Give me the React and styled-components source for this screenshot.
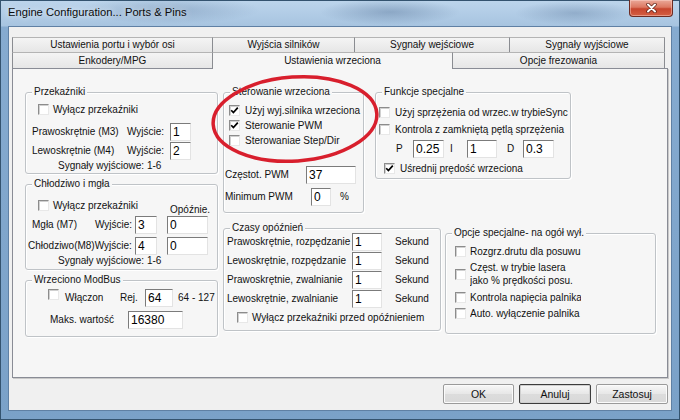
import React from 'react';
import styled, { createGlobalStyle } from 'styled-components';

const PAGE_BG = '#f6f6f6';

const GlobalStyle = createGlobalStyle`
  html, body { margin: 0; padding: 0; }
  body {
    width: 680px;
    height: 420px;
    overflow: hidden;
    font-family: "Liberation Sans", Arial, sans-serif;
    font-size: 10px;
    color: #111;
  }
`;

const Window = styled.div`
  position: relative;
  width: 680px;
  height: 420px;
  box-sizing: border-box;
  display: flex;
  flex-direction: column;
  overflow: hidden;
  background:
    radial-gradient(ellipse 90px 14px at 170px 10px, rgba(60, 90, 130, 0.25), transparent),
    radial-gradient(ellipse 70px 13px at 390px 12px, rgba(50, 80, 120, 0.3), transparent),
    radial-gradient(ellipse 60px 12px at 575px 13px, rgba(50, 80, 120, 0.25), transparent),
    linear-gradient(#bdd5ec, #a7c4e0 26px, #86abd0 27px, #7aa1c8);
  box-shadow: inset 0 0 0 1px #34536f;
`;

const TitleBar = styled.div`
  height: 26px;
  flex-shrink: 0;
  display: flex;
  align-items: flex-start;
  justify-content: space-between;
`;

const Title = styled.div`
  padding-left: 8px;
  line-height: 24px;
  font-size: 11.2px;
  color: #0c0c0c;
  text-shadow: 0 0 6px rgba(255, 255, 255, 0.9);
`;

const CloseButton = styled.div`
  width: 44px;
  height: 17px;
  margin-right: 7px;
  box-sizing: border-box;
  display: flex;
  align-items: center;
  justify-content: center;
  border: 1px solid #6d2b22;
  border-top: none;
  border-radius: 0 0 4px 4px;
  background: linear-gradient(#eaa899 0%, #dc7862 45%, #c7452e 55%, #d45f43 100%);
  box-shadow: inset 0 0 0 1px rgba(255, 220, 210, 0.45);
`;

const Client = styled.div`
  flex: 1;
  margin: 0 8px 9px 8px;
  display: flex;
  flex-direction: column;
  padding: 10px 3px 0 3px;
  background: #f0f0f0;
  border: 1px solid #5f80a4;
`;

const TabRow = styled.div`
  display: flex;
  align-items: flex-end;
  height: ${p => p.h}px;
`;

const Tab = styled.div`
  position: relative;
  width: ${p => p.w}px;
  height: ${p => (p.selected ? p.h + 1 : p.h)}px;
  margin-bottom: ${p => (p.selected ? -1 : 0)}px;
  z-index: ${p => (p.selected ? 1 : 0)};
  box-sizing: border-box;
  border-top: 1px solid #b4b4b4;
  border-right: 1px solid #8a8c91;
  border-left: ${p => (p.first ? '1px solid #8a8c91' : 'none')};
  background: ${p => (p.selected ? PAGE_BG : 'linear-gradient(#f4f4f4, #e6e6e6)')};
  text-align: center;
  line-height: ${p => p.h - 1}px;
  white-space: nowrap;
`;

const TabPage = styled.div`
  height: 310px;
  box-sizing: border-box;
  display: flex;
  gap: 5px;
  padding: 23px 0 0 12px;
  background: ${PAGE_BG};
  border: 1px solid #898c95;
  box-shadow: 1px 1px 0 #c9c9c9;
`;

const Column = styled.div`
  display: flex;
  flex-direction: column;
  gap: ${p => p.gap || 0}px;
`;

const Line = styled.div`
  display: flex;
  align-items: flex-start;
  gap: ${p => p.gap || 0}px;
  margin-top: ${p => p.mt || 0}px;
`;

const Group = styled.div`
  position: relative;
  flex-shrink: 0;
  width: ${p => p.w}px;
  height: ${p => p.h}px;
  margin-top: ${p => p.mt || 0}px;
  box-sizing: border-box;
  padding: ${p => p.pad};
  border: 1px solid #bfc3c7;
  border-radius: 3px;
  box-shadow: inset 1px 1px 0 #fff, 1px 1px 0 #fff;
  display: flex;
  flex-direction: column;
`;

const GroupTitle = styled.span`
  position: absolute;
  top: -7px;
  left: 6px;
  padding: 0 2px;
  line-height: 12px;
  background: ${PAGE_BG};
  color: #141414;
  white-space: nowrap;
`;

const Row = styled.div`
  display: flex;
  align-items: ${p => p.align || 'center'};
  flex-shrink: 0;
  height: ${p => p.h}px;
  margin-top: ${p => p.mt || 0}px;
  padding-left: ${p => p.pl || 0}px;
`;

const Text = styled.span`
  flex-shrink: 0;
  white-space: nowrap;
  line-height: 12px;
  width: ${p => (p.w ? `${p.w}px` : 'auto')};
  margin-left: ${p => p.ml || 0}px;
  align-self: ${p => p.self || 'auto'};
`;

const ClipText = styled.span`
  width: 111px;
  margin-left: 4px;
  overflow: hidden;
  white-space: nowrap;
  line-height: 13px;
`;

const Field = styled.input`
  flex-shrink: 0;
  width: ${p => p.w}px;
  height: 18px;
  margin: 0 0 0 ${p => p.ml || 0}px;
  padding: 0 2px;
  box-sizing: border-box;
  font-family: "Liberation Sans", Arial, sans-serif;
  font-size: 12px;
  line-height: 16px;
  color: #000;
  background: #fff;
  border: 1px solid;
  border-color: #7b7b7b #e3e3e3 #e3e3e3 #7b7b7b;
  outline: none;
`;

const Box = styled.span`
  flex-shrink: 0;
  width: 11px;
  height: 11px;
  box-sizing: border-box;
  align-self: ${p => p.self || 'auto'};
  background: #fff;
  border: 1px solid;
  border-color: #8c8c8c #e8e8e8 #e8e8e8 #8c8c8c;
  box-shadow: inset 1px 1px 0 #d0d0d0;
  display: flex;
  align-items: center;
  justify-content: center;
`;

const ButtonBar = styled.div`
  display: flex;
  justify-content: flex-end;
  gap: 5px;
  margin-top: 6px;
`;

const Button = styled.div`
  width: ${p => p.w}px;
  height: 20px;
  box-sizing: border-box;
  display: flex;
  align-items: center;
  justify-content: center;
  font-size: 10.5px;
  border: 1px solid ${p => (p.primary ? '#3c3c3c' : '#9a9a9a')};
  border-radius: 2px;
  background: linear-gradient(#f7f7f7, #e7e7e7 50%, #dcdcdc 51%, #d9d9d9);
  box-shadow: inset 0 0 0 1px ${p => (p.primary ? '#cfcfcf' : '#fbfbfb')};
`;

const Mark = styled.svg`
  position: absolute;
  left: 0;
  top: 0;
  pointer-events: none;
`;

const CheckBox = ({ checked, self }) => (
  <Box self={self}>
    {checked && (
      <svg width="9" height="9" viewBox="0 0 9 9">
        <path d="M1.2 4.2 L3.4 6.6 L7.8 1.6" fill="none" stroke="#000" strokeWidth="1.7" />
      </svg>
    )}
  </Box>
);

const rowOne = [
  { label: 'Ustawienia portu i wybór osi', w: 201 },
  { label: 'Wyjścia silników', w: 142 },
  { label: 'Sygnały wejściowe', w: 155 },
  { label: 'Sygnały wyjściowe', w: 155 },
];

const rowTwo = [
  { label: 'Enkodery/MPG', w: 201 },
  { label: 'Ustawienia wrzeciona', w: 240, selected: true },
  { label: 'Opcje frezowania', w: 212 },
];

const delays = [
  'Prawoskrętnie, rozpędzanie',
  'Lewoskrętnie, rozpędzanie',
  'Prawoskrętnie, zwalnianie',
  'Lewoskrętnie, zwalnianie',
];

const App = () => {
  return (
    <>
      <GlobalStyle />
      <Window>
        <TitleBar>
          <Title>Engine Configuration... Ports &amp; Pins</Title>
          <CloseButton>
            <svg width="11" height="10" viewBox="0 0 11 10">
              <path d="M2 1.5 L9 8.5 M9 1.5 L2 8.5" stroke="#5a1c12" strokeWidth="3.4" strokeLinecap="round" />
              <path d="M2 1.5 L9 8.5 M9 1.5 L2 8.5" stroke="#fff" strokeWidth="2" strokeLinecap="round" />
            </svg>
          </CloseButton>
        </TitleBar>

        <Client>
          <TabRow h={15}>
            {rowOne.map((t, i) => (
              <Tab key={t.label} w={t.w} h={15} first={i === 0}>{t.label}</Tab>
            ))}
          </TabRow>
          <TabRow h={16}>
            {rowTwo.map((t, i) => (
              <Tab key={t.label} w={t.w} h={16} first={i === 0} selected={t.selected}>{t.label}</Tab>
            ))}
          </TabRow>

          <TabPage>
            <Column gap={10}>
              <Group w={193} h={82} pad="11px 0 0 6px">
                <GroupTitle>Przekaźniki</GroupTitle>
                <Row h={11} pl={6}>
                  <CheckBox />
                  <Text ml={4}>Wyłącz przekaźniki</Text>
                </Row>
                <Row h={18} mt={8}>
                  <Text w={95}>Prawoskrętnie (M3)</Text>
                  <Text w={43}>Wyjście:</Text>
                  <Field w={21} defaultValue="1" readOnly />
                </Row>
                <Row h={18} mt={1}>
                  <Text w={95}>Lewoskrętnie (M4)</Text>
                  <Text w={43}>Wyjście:</Text>
                  <Field w={21} defaultValue="2" readOnly />
                </Row>
                <Row h={12} pl={26}>
                  <Text>Sygnały wyjściowe: 1-6</Text>
                </Row>
              </Group>

              <Group w={193} h={86} pad="15px 0 0 2px">
                <GroupTitle>Chłodziwo i mgła</GroupTitle>
                <Row h={16} pl={10} align="flex-start">
                  <CheckBox />
                  <Text ml={4} w={117}>Wyłącz przekaźniki</Text>
                  <Text self="flex-end">Opóźnie.</Text>
                </Row>
                <Row h={18}>
                  <Text ml={4} w={63}>Mgła (M7)</Text>
                  <Text w={40}>Wyjście:</Text>
                  <Field w={22} defaultValue="3" readOnly />
                  <Field w={41} ml={10} defaultValue="0" readOnly />
                </Row>
                <Row h={18} mt={3}>
                  <Text w={107}>Chłodziwo(M8)Wyjście:</Text>
                  <Field w={22} defaultValue="4" readOnly />
                  <Field w={41} ml={10} defaultValue="0" readOnly />
                </Row>
                <Row h={12} pl={30}>
                  <Text>Sygnały wyjściowe: 1-6</Text>
                </Row>
              </Group>

              <Group w={193} h={57} pad="8px 0 0 2px">
                <GroupTitle>Wrzeciono ModBus</GroupTitle>
                <Row h={18} pl={20}>
                  <CheckBox self="flex-start" />
                  <Text ml={6} w={55}>Włączon</Text>
                  <Text w={25}>Rej.</Text>
                  <Field w={28} defaultValue="64" readOnly />
                  <Text ml={5}>64 - 127</Text>
                </Row>
                <Row h={18} mt={4}>
                  <Text ml={22} w={78}>Maks. wartość</Text>
                  <Field w={55} defaultValue="16380" readOnly />
                </Row>
              </Group>
            </Column>

            <Column>
              <Line gap={11}>
                <Group w={141} h={121} pad="12px 0 0 1px">
                  <GroupTitle>Sterowanie wrzeciona</GroupTitle>
                  <Row h={11} pl={4}>
                    <CheckBox checked />
                    <Text ml={5}>Użyj wyj.silnika wrzeciona</Text>
                  </Row>
                  <Row h={11} pl={4} mt={4}>
                    <CheckBox checked />
                    <Text ml={5}>Sterowanie PWM</Text>
                  </Row>
                  <Row h={11} pl={4} mt={4}>
                    <CheckBox />
                    <Text ml={5}>Sterowaniae Step/Dir</Text>
                  </Row>
                  <Row h={18} mt={20}>
                    <Text w={81}>Częstot. PWM</Text>
                    <Field w={50} defaultValue="37" readOnly />
                  </Row>
                  <Row h={18} mt={4}>
                    <Text w={86}>Minimum PWM</Text>
                    <Field w={20} defaultValue="0" readOnly />
                    <Text ml={9}>%</Text>
                  </Row>
                </Group>

                <Group w={196} h={87} pad="14px 0 0 3px">
                  <GroupTitle>Funkcje specjalne</GroupTitle>
                  <Row h={11}>
                    <CheckBox />
                    <Text ml={5}>Użyj sprzężenia od wrzec.w trybieSync</Text>
                  </Row>
                  <Row h={11} mt={6}>
                    <CheckBox />
                    <Text ml={5}>Kontrola z zamkniętą pętlą sprzężenia</Text>
                  </Row>
                  <Row h={18} mt={5}>
                    <Text ml={17} w={17}>P</Text>
                    <Field w={31} defaultValue="0.25" readOnly />
                    <Text ml={6} w={17}>I</Text>
                    <Field w={30} defaultValue="1" readOnly />
                    <Text ml={10} w={16}>D</Text>
                    <Field w={31} defaultValue="0.3" readOnly />
                  </Row>
                  <Row h={11} mt={5} pl={5}>
                    <CheckBox checked />
                    <Text ml={5}>Uśrednij prędość wrzeciona</Text>
                  </Row>
                </Group>
              </Line>

              <Line gap={4} mt={15}>
                <Group w={218} h={103} pad="4px 0 0 3px">
                  <GroupTitle>Czasy opóźnień</GroupTitle>
                  {delays.map((d, i) => (
                    <Row key={d} h={18} mt={i === 0 ? 0 : 1}>
                      <Text w={125}>{d}</Text>
                      <Field w={30} defaultValue="1" readOnly />
                      <Text ml={13}>Sekund</Text>
                    </Row>
                  ))}
                  <Row h={11} mt={4} pl={10}>
                    <CheckBox />
                    <Text ml={4}>Wyłącz przekaźniki przed opóźnieniem</Text>
                  </Row>
                </Group>

                <Group w={211} h={101} mt={5} pad="11px 0 0 9px">
                  <GroupTitle>Opcje specjalne- na ogół wył.</GroupTitle>
                  <Row h={12}>
                    <CheckBox />
                    <ClipText>Rozgrz.drutu dla posuwu</ClipText>
                  </Row>
                  <Row h={26} mt={4}>
                    <CheckBox />
                    <ClipText>
                      Częst. w trybie lasera
                      <br />
                      jako % prędkości posu.
                    </ClipText>
                  </Row>
                  <Row h={12} mt={4}>
                    <CheckBox />
                    <ClipText>Kontrola napięcia palnika</ClipText>
                  </Row>
                  <Row h={12} mt={4}>
                    <CheckBox />
                    <ClipText>Auto. wyłączenie palnika</ClipText>
                  </Row>
                </Group>
              </Line>
            </Column>
          </TabPage>

          <ButtonBar>
            <Button w={71}>OK</Button>
            <Button w={72} primary>Anuluj</Button>
            <Button w={72}>Zastosuj</Button>
          </ButtonBar>
        </Client>

        <Mark width="680" height="420" viewBox="0 0 680 420">
          <ellipse
            cx="295"
            cy="119"
            rx="82"
            ry="42"
            fill="none"
            stroke="#d81f2d"
            strokeWidth="3.5"
            transform="rotate(-4 295 119)"
          />
        </Mark>
      </Window>
    </>
  );
};

export default App;
